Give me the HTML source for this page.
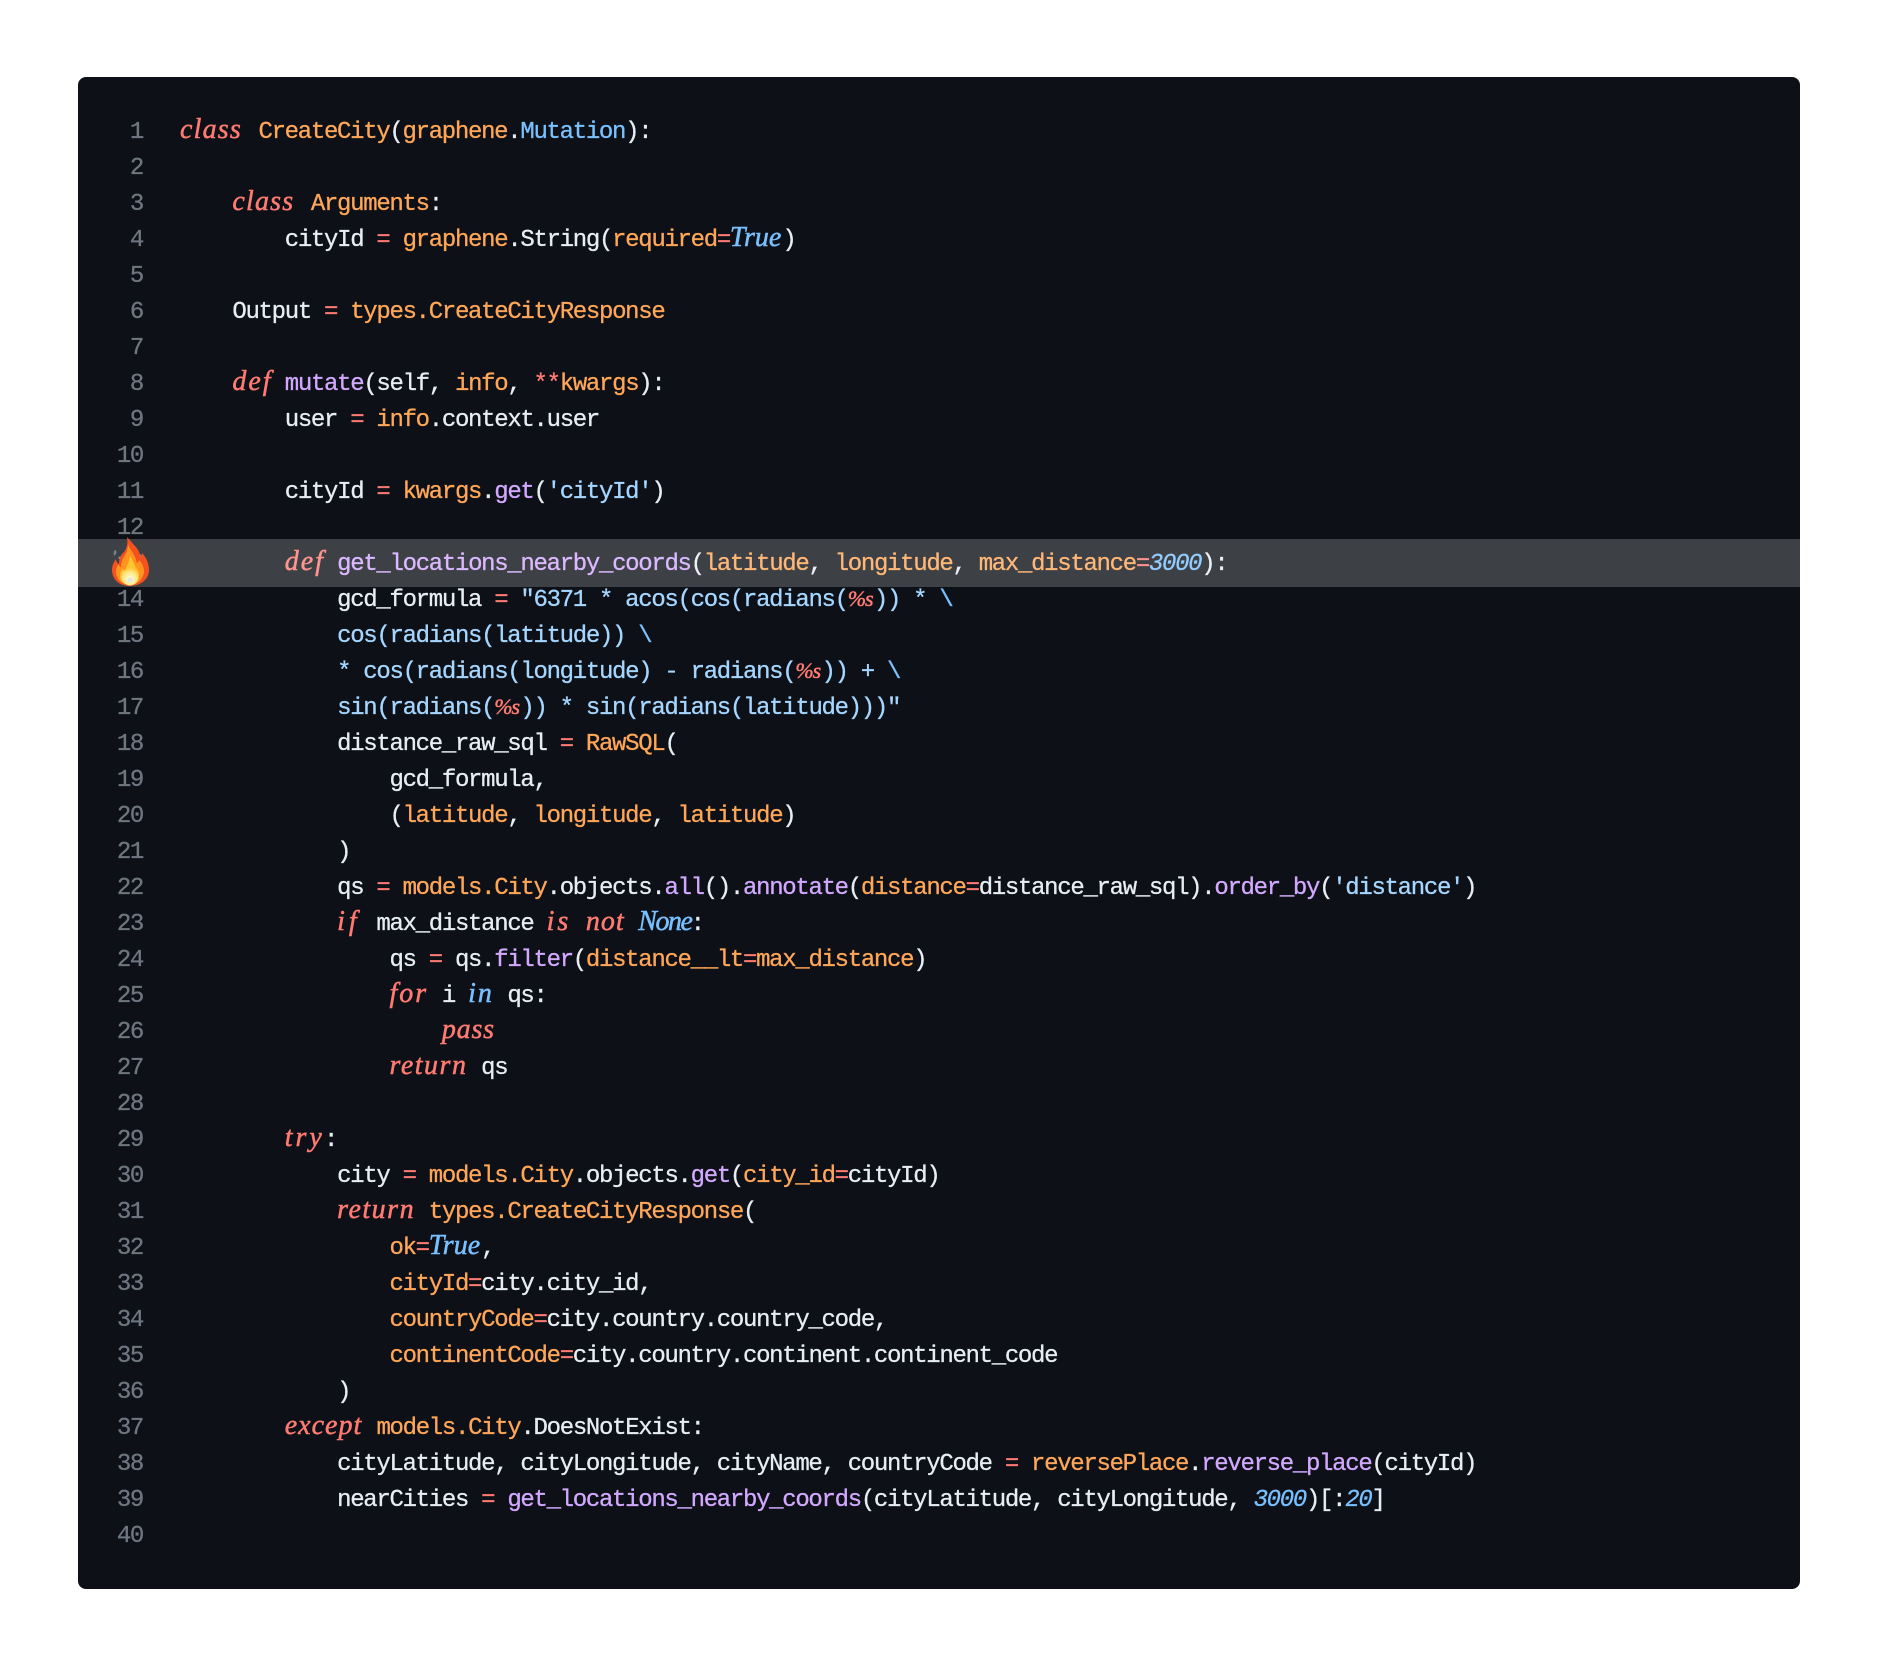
<!DOCTYPE html>
<html>
<head>
<meta charset="utf-8">
<style>
html,body{margin:0;padding:0;background:#fff;width:1878px;height:1668px;overflow:hidden}
#box{position:absolute;left:78px;top:77px;width:1722px;height:1512px;background:#0d1117;border-radius:8px;overflow:hidden}
.n,.l{position:absolute;height:36px;line-height:36px;margin-top:3px;font-family:"Liberation Mono",monospace;font-size:24px;letter-spacing:-1.31px;white-space:pre;-webkit-text-stroke:.3px currentColor}
.n{left:0;width:65px;text-align:right;color:#6e7681}
.l{left:102px;color:#e6edf3}
.o{color:#ffa657}.b{color:#79c0ff}.s{color:#a5d6ff}.f{color:#d2a8ff}.r{color:#ff7b72}
.i{color:#79c0ff;font-style:italic}
.k,.q{display:inline-block;line-height:0;vertical-align:baseline;font-family:"Liberation Serif",serif;font-style:italic;font-size:28px;color:#ff7b72;-webkit-text-stroke:.5px currentColor}
.q{color:#79c0ff}
.class{width:65.4px;letter-spacing:1.2px}
.def{width:39.3px;letter-spacing:2px}
.true{width:52.4px;letter-spacing:0}
.none{width:52.4px;letter-spacing:-1.5px}
.pc{width:26.2px;font-size:22px;letter-spacing:-1px}
.if{width:26.2px;letter-spacing:4px}
.is{width:26.2px;letter-spacing:3px}
.not{width:39.3px;letter-spacing:1px}
.in{width:26.2px;letter-spacing:2px}
.for{width:39.3px;letter-spacing:2px}
.try{width:39.3px;letter-spacing:3px}
.pass{width:52.4px;letter-spacing:.8px}
.return{width:78.6px;letter-spacing:1.5px}
.except{width:78.6px;letter-spacing:1px}
#hl{position:absolute;left:0;top:462px;width:1722px;height:48px;background:rgba(255,255,255,.2)}
#fire{position:absolute;left:22px;top:455px}
</style>
</head>
<body>
<div id="box">
<div class="n" style="top:35px">1</div><div class="l" style="top:35px"><span class="k class">class</span> <span class="o">CreateCity</span>(<span class="o">graphene</span>.<span class="b">Mutation</span>):</div>
<div class="n" style="top:71px">2</div>
<div class="n" style="top:107px">3</div><div class="l" style="top:107px">    <span class="k class">class</span> <span class="o">Arguments</span>:</div>
<div class="n" style="top:143px">4</div><div class="l" style="top:143px">        cityId <span class="r">=</span> <span class="o">graphene</span>.String(<span class="o">required</span><span class="r">=</span><span class="q true">True</span>)</div>
<div class="n" style="top:179px">5</div>
<div class="n" style="top:215px">6</div><div class="l" style="top:215px">    Output <span class="r">=</span> <span class="o">types.CreateCityResponse</span></div>
<div class="n" style="top:251px">7</div>
<div class="n" style="top:287px">8</div><div class="l" style="top:287px">    <span class="k def">def</span> <span class="f">mutate</span>(self, <span class="o">info</span>, <span class="r">**</span><span class="o">kwargs</span>):</div>
<div class="n" style="top:323px">9</div><div class="l" style="top:323px">        user <span class="r">=</span> <span class="o">info</span>.context.user</div>
<div class="n" style="top:359px">10</div>
<div class="n" style="top:395px">11</div><div class="l" style="top:395px">        cityId <span class="r">=</span> <span class="o">kwargs</span>.<span class="f">get</span>(<span class="s">'cityId'</span>)</div>
<div class="n" style="top:431px">12</div>
<div class="n" style="top:467px">13</div><div class="l" style="top:467px">        <span class="k def">def</span> <span class="f">get_locations_nearby_coords</span>(<span class="o">latitude</span>, <span class="o">longitude</span>, <span class="o">max_distance</span><span class="r">=</span><span class="i">3000</span>):</div>
<div class="n" style="top:503px">14</div><div class="l" style="top:503px">            gcd_formula <span class="r">=</span> <span class="s">"6371 * acos(cos(radians(</span><span class="k pc">%s</span><span class="s">)) * </span><span class="b">\</span></div>
<div class="n" style="top:539px">15</div><div class="l" style="top:539px">            <span class="s">cos(radians(latitude)) </span><span class="b">\</span></div>
<div class="n" style="top:575px">16</div><div class="l" style="top:575px">            <span class="s">* cos(radians(longitude) - radians(</span><span class="k pc">%s</span><span class="s">)) + </span><span class="b">\</span></div>
<div class="n" style="top:611px">17</div><div class="l" style="top:611px">            <span class="s">sin(radians(</span><span class="k pc">%s</span><span class="s">)) * sin(radians(latitude)))"</span></div>
<div class="n" style="top:647px">18</div><div class="l" style="top:647px">            distance_raw_sql <span class="r">=</span> <span class="o">RawSQL</span>(</div>
<div class="n" style="top:683px">19</div><div class="l" style="top:683px">                gcd_formula,</div>
<div class="n" style="top:719px">20</div><div class="l" style="top:719px">                (<span class="o">latitude</span>, <span class="o">longitude</span>, <span class="o">latitude</span>)</div>
<div class="n" style="top:755px">21</div><div class="l" style="top:755px">            )</div>
<div class="n" style="top:791px">22</div><div class="l" style="top:791px">            qs <span class="r">=</span> <span class="o">models.City</span>.objects.<span class="f">all</span>().<span class="f">annotate</span>(<span class="o">distance</span><span class="r">=</span>distance_raw_sql).<span class="f">order_by</span>(<span class="s">'distance'</span>)</div>
<div class="n" style="top:827px">23</div><div class="l" style="top:827px">            <span class="k if">if</span> max_distance <span class="k is">is</span> <span class="k not">not</span> <span class="q none">None</span>:</div>
<div class="n" style="top:863px">24</div><div class="l" style="top:863px">                qs <span class="r">=</span> qs.<span class="f">filter</span>(<span class="o">distance__lt</span><span class="r">=</span><span class="o">max_distance</span>)</div>
<div class="n" style="top:899px">25</div><div class="l" style="top:899px">                <span class="k for">for</span> i <span class="q in">in</span> qs:</div>
<div class="n" style="top:935px">26</div><div class="l" style="top:935px">                    <span class="k pass">pass</span></div>
<div class="n" style="top:971px">27</div><div class="l" style="top:971px">                <span class="k return">return</span> qs</div>
<div class="n" style="top:1007px">28</div>
<div class="n" style="top:1043px">29</div><div class="l" style="top:1043px">        <span class="k try">try</span>:</div>
<div class="n" style="top:1079px">30</div><div class="l" style="top:1079px">            city <span class="r">=</span> <span class="o">models.City</span>.objects.<span class="f">get</span>(<span class="o">city_id</span><span class="r">=</span>cityId)</div>
<div class="n" style="top:1115px">31</div><div class="l" style="top:1115px">            <span class="k return">return</span> <span class="o">types.CreateCityResponse</span>(</div>
<div class="n" style="top:1151px">32</div><div class="l" style="top:1151px">                <span class="o">ok</span><span class="r">=</span><span class="q true">True</span>,</div>
<div class="n" style="top:1187px">33</div><div class="l" style="top:1187px">                <span class="o">cityId</span><span class="r">=</span>city.city_id,</div>
<div class="n" style="top:1223px">34</div><div class="l" style="top:1223px">                <span class="o">countryCode</span><span class="r">=</span>city.country.country_code,</div>
<div class="n" style="top:1259px">35</div><div class="l" style="top:1259px">                <span class="o">continentCode</span><span class="r">=</span>city.country.continent.continent_code</div>
<div class="n" style="top:1295px">36</div><div class="l" style="top:1295px">            )</div>
<div class="n" style="top:1331px">37</div><div class="l" style="top:1331px">        <span class="k except">except</span> <span class="o">models.City</span>.DoesNotExist:</div>
<div class="n" style="top:1367px">38</div><div class="l" style="top:1367px">            cityLatitude, cityLongitude, cityName, countryCode <span class="r">=</span> <span class="o">reversePlace</span>.<span class="f">reverse_place</span>(cityId)</div>
<div class="n" style="top:1403px">39</div><div class="l" style="top:1403px">            nearCities <span class="r">=</span> <span class="f">get_locations_nearby_coords</span>(cityLatitude, cityLongitude, <span class="i">3000</span>)[:<span class="i">20</span>]</div>
<div class="n" style="top:1439px">40</div>
<div id="hl"></div>
<svg id="fire" width="60" height="60" viewBox="100 532 60 60">
<defs>
<radialGradient id="g" gradientUnits="userSpaceOnUse" cx="130" cy="579" r="11">
<stop offset="0" stop-color="#fffbe8"/><stop offset=".55" stop-color="#ffeb8f"/><stop offset="1" stop-color="#ffc93c"/>
</radialGradient>
</defs>
<path fill="#7a7f85" d="M114 551l2-1 .5 3-2 3-1-2z"/>
<path fill="#f4511e" d="M127 537c3 3 5 6 8 9 3 3 5 7 5.500 11 1-1 1.500-2 1.500-4 4 4 7 10 7 17 0 9-8 16-19 16s-18-7-18-16c0-5 2-8 4-11 0 2 1 4 3 5 0-6 2-9 5-12 3-4 4-9 3-15z"/>
<path fill="#ff9420" d="M128 544c1 4 4 7 6 11 2 3 2 6 3 8 1-1 2-2 2-3 3 3 5 7 5 11 0 7-6 14-14 14s-14-6-14-13c0-4 1-6 3-8 0 2 1 3 2 3 0-4 1-7 3-10 2-3 4-8 4-13z"/>
<path fill="#ffc62f" d="M130 555c1 3 3 6 4 9 1 2 2 4 3 5 1 2 2 4 2 6 0 6-4 10-9 10s-10-4-10-9c0-3 1-5 3-7 1 1 1 2 2 2 1-4 5-10 5-16z"/>
<circle cx="130" cy="577" r="8.500" fill="url(#g)"/>
<circle cx="130" cy="580" r="2.500" fill="#e3e6e3"/>
</svg>
</div>
</body>
</html>
